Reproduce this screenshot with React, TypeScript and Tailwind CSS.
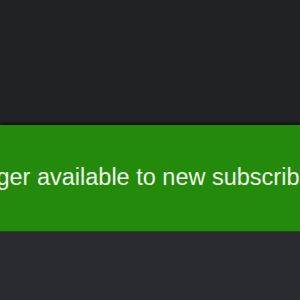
export default function App() {
    return (
        <div className="flex h-[300px] w-[300px] flex-col overflow-hidden bg-[#222327] font-['Liberation_Sans',Arial,sans-serif]">
            <div className="h-[125px] shrink-0 bg-[#212226]"></div>
            <div className="flex h-[106px] shrink-0 items-start overflow-hidden bg-[#238a0c] pt-[39px] shadow-[0_-2px_3px_rgba(0,0,0,0.5)]">
                <p className="-ml-[193px] whitespace-nowrap text-[23.5px] leading-[26px] text-[#eef6e8]">
                    This plan is no longer available to new subscribers.
                </p>
            </div>
            <div className="flex-1 border-t border-[#1f4a18] bg-[#292b30]"></div>
        </div>
    )
}
